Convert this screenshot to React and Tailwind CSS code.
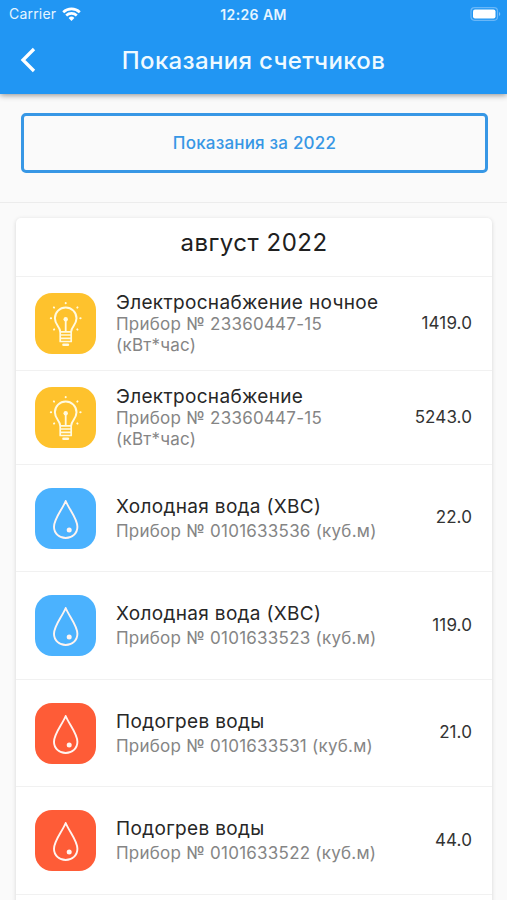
const readings = [
  {
    id: 1,
    type: "light",
    name: "Электроснабжение ночное",
    device: "Прибор № 23360447-15",
    unit: "(кВт*час)",
    value: "1419.0",
    height: "h-[94px]",
  },
  {
    id: 2,
    type: "light",
    name: "Электроснабжение",
    device: "Прибор № 23360447-15",
    unit: "(кВт*час)",
    value: "5243.0",
    height: "h-[94px]",
  },
  { id: 3, type: "cold", name: "Холодная вода (ХВС)", device: "Прибор № 0101633536 (куб.м)", value: "22.0", height: "h-[107px]" },
  { id: 4, type: "cold", name: "Холодная вода (ХВС)", device: "Прибор № 0101633523 (куб.м)", value: "119.0", height: "h-[108px]" },
  { id: 5, type: "hot", name: "Подогрев воды", device: "Прибор № 0101633531 (куб.м)", value: "21.0", height: "h-[107px]" },
  { id: 6, type: "hot", name: "Подогрев воды", device: "Прибор № 0101633522 (куб.м)", value: "44.0", height: "h-[108px]" },
];

const iconColors = {
  light: "bg-[#fec22d]",
  cold: "bg-[#4bb2fe]",
  hot: "bg-[#fe5c37]",
};

const BulbIcon = () => (
  <svg viewBox="0 0 61 61" className="w-full h-full" fill="none" stroke="#fffae0" strokeWidth="2" strokeLinecap="round" strokeLinejoin="round">
    <path d="M25.2 38.500c0-4.500-5.300-6.500-5.300-13.200a10.800 10.800 0 0 1 21.600 0c0 6.700-5.300 8.700-5.300 13.200" />
    <path d="M30.700 38V27" strokeWidth="1.800" />
    <circle cx="30.700" cy="26.200" r="2.200" fill="#fffae0" stroke="none" />
    <path d="M25.200 38.800v9.700h11V38.800zM25.500 42h10.400M25.500 45.300h10.400" strokeWidth="1.700" />
    <path d="M28.500 51.800h4.400" strokeWidth="2.600" />
    <path d="M30.700 10v.2M18.900 14.400l.2.200M42.300 14.600l.2-.2M15.800 25.200h.3M45.300 25.200h.3M19 36.600l.2-.2M42.300 36.400l.2.200" strokeWidth="2" />
  </svg>
);

const DropIcon = () => (
  <svg viewBox="0 0 61 61" className="w-full h-full" fill="none" stroke="#fff4f0" strokeWidth="1.900" strokeLinejoin="round">
    <path d="M30.700 13C27 22 19 30.500 19 38.800c0 6.700 5.200 11.200 11.700 11.200s11.700-4.500 11.700-11.200c0-8.300-8-16.800-11.700-25.800z" />
    <circle cx="34.200" cy="42" r="2.500" fill="#fff4f0" stroke="none" />
  </svg>
);

const StatusBar = () => (
  <div className="relative flex h-[27px] items-center justify-between pl-[9px] pr-[6px] text-[14px] text-[#e6f5ff]">
    <div className="flex items-center gap-[6px]">
      <span className="tracking-[0.2px]">Carrier</span>
      <svg viewBox="0 0 19 14" className="w-[19px] h-[14px]" fill="none" stroke="#fff" strokeWidth="2.600">
        <path d="M1.200 5.200a12 12 0 0 1 16.600 0M4.200 8.500a7.700 7.700 0 0 1 10.600 0" />
        <path d="M6.600 11a4.200 4.200 0 0 1 5.800 0L9.500 14z" fill="#fff" stroke="none" />
      </svg>
    </div>
    <span className="absolute left-1/2 -translate-x-1/2 whitespace-nowrap pt-px text-[14px] font-semibold tracking-[0.4px]">12:26 AM</span>
    <svg viewBox="0 0 31 14" className="w-[31px] h-[14px]">
      <rect x="1" y="0.700" width="26.500" height="12.600" rx="3.500" fill="none" stroke="#69b7f8" strokeWidth="1.200" />
      <rect x="3" y="2.500" width="22.500" height="9" rx="2" fill="#fff" />
      <path d="M29 5a2.200 2.200 0 0 1 0 4z" fill="#7fc1fa" />
    </svg>
  </div>
);

const ReadingRow = ({ item }) => (
  <li className={`flex items-center border-t border-[#f1f1f1] pl-[19px] pr-5 ${item.height}`}>
    <div className={`w-[61px] h-[61px] shrink-0 rounded-[17px] ${iconColors[item.type]}`}>
      {item.type === "light" ? <BulbIcon /> : <DropIcon />}
    </div>
    <div className="ml-5 flex-1 whitespace-nowrap pt-px">
      <h3 className={`text-[19px] tracking-[0.33px] text-[#272727] ${item.unit ? "leading-[22px]" : "leading-[25px]"}`}>{item.name}</h3>
      <p className={`text-[17px] tracking-[0.24px] text-[#858585] ${item.unit ? "leading-[21px]" : "leading-[25px]"}`}>{item.device}</p>
      {item.unit && <p className="text-[17px] leading-[21px] tracking-[0.24px] text-[#858585]">{item.unit}</p>}
    </div>
    <span className="text-[17px] tracking-[0.1px] text-[#333]">{item.value}</span>
  </li>
);

const App = () => {
  return (
    <div className="h-[900px] w-full overflow-hidden bg-[#fafafa] font-['Inter','Roboto',sans-serif]">
      <header className="relative h-[94px] bg-[#2196f3] shadow-[0_1px_6px_rgba(0,0,0,0.45)]">
        <StatusBar />
        <div className="flex h-[66px] items-center">
          <button className="ml-5 w-4 shrink-0" aria-label="Назад">
            <svg viewBox="0 0 16 26" className="w-4 h-[26px]" fill="none" stroke="#fff" strokeWidth="3.300">
              <path d="M14 2 3 13l11 11" />
            </svg>
          </button>
          <h1 className="flex-1 pr-9 pt-px text-center text-[24px] font-medium tracking-[0.34px] text-[#effaff]">Показания счетчиков</h1>
        </div>
      </header>

      <div className="h-[109px] border-b border-[#ececec] pl-[21px] pr-[19px] pt-[19px]">
        <button className="h-[60px] w-full rounded-[5px] border-[3px] border-[#3797e5] pt-px text-[17px] font-medium tracking-[0.2px] text-[#3797e5]">
          Показания за 2022
        </button>
      </div>

      <section className="ml-4 mr-[15px] mt-[15px] h-[700px] rounded-[5px] bg-white shadow-[0_1px_4px_rgba(0,0,0,0.15)]">
        <h2 className="h-[58px] pt-[10px] text-center text-[24px] leading-[30px] tracking-[0.5px] text-[#202020]">август 2022</h2>
        <ul>
          {readings.map((item) => (
            <ReadingRow key={item.id} item={item} />
          ))}
          <li className="border-t border-[#f1f1f1]" />
        </ul>
      </section>
    </div>
  );
};

export default App;
